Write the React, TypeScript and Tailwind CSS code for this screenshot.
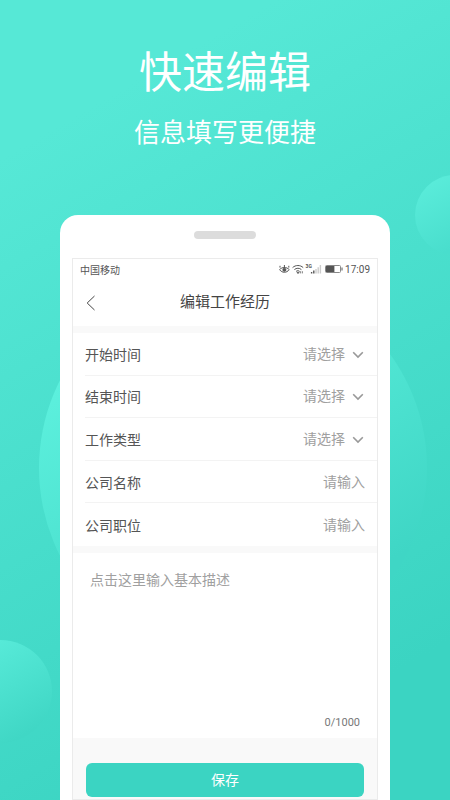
import { useState } from "react";

const selectFields = [
  { id: "start", label: "开始时间", options: ["2019年", "2020年", "2021年"] },
  { id: "end", label: "结束时间", options: ["2020年", "2021年", "至今"] },
  { id: "type", label: "工作类型", options: ["全职", "兼职", "实习"] },
];

const inputFields = [
  { id: "company", label: "公司名称" },
  { id: "position", label: "公司职位" },
];

const MAX_LENGTH = 1000;

const StatusIcons = () => (
  <svg
    width="64"
    height="12"
    viewBox="0 0 64 12"
    fill="none"
    stroke="#555"
    aria-hidden="true"
  >
    {/* eye */}
    <path d="M.6 6.6C3.2 3.8 7.6 3.8 10.2 6.6C7.6 10.2 3.2 10.2 .6 6.6Z" />
    <circle cx="5.4" cy="6.8" r="1.5" fill="#555" />
    <path d="M5.4 5V2M1 4.6V2.8M9.8 4.6V2.8" />
    {/* wifi */}
    <path d="M13.6 4.6C16.6 1.8 21.2 1.8 24.2 4.6M15.4 6.6C17.4 4.8 20.4 4.8 22.4 6.6M17.1 8.4C18.2 7.5 19.6 7.5 20.6 8.4" />
    <path d="M18 9.4h2l-1 1.2zM21.3 10.4V8.2M23.3 8.2v2.2" fill="#555" strokeWidth=".8" />
    {/* signal */}
    <text x="26.6" y="5" fill="#555" stroke="none" className="font-[Roboto] text-[5px] font-bold">
      3G
    </text>
    <path d="M32.6 10.5V9M34.8 10.5V7.5" strokeWidth="1.4" />
    <path d="M37 10.5V6M39.2 10.5V4.2M41.4 10.5V2" stroke="#ccc" strokeWidth="1.4" />
    {/* battery */}
    <rect x="46.5" y="2.5" width="15" height="7" rx="1" stroke="#888" />
    <rect x="47" y="3" width="8.4" height="6" fill="#555" stroke="none" />
    <path d="M63 4.5v3" />
  </svg>
);

const Chevron = () => (
  <svg
    className="pointer-events-none absolute right-0 top-2"
    width="12"
    height="8"
    viewBox="0 0 12 8"
    fill="none"
    stroke="#999"
    strokeWidth="1.6"
    aria-hidden="true"
  >
    <path d="M1.2 1.2L6 6L10.8 1.2" />
  </svg>
);

const Backdrop = () => (
  <div className="absolute inset-0 overflow-hidden" aria-hidden="true">
    <div className="absolute left-[39px] top-[274px] size-[388px] rounded-full bg-linear-[150deg,#5cf0dd_20%,#3fd6c5_80%]" />
    <div className="absolute -left-[51px] top-[640px] size-[103px] rounded-full bg-linear-[150deg,#58ebd9_15%,#40d7c5_85%]" />
    <div className="absolute -right-[45px] top-[175px] size-20 rounded-full bg-linear-[150deg,#5aecda_10%,#49decd_75%]" />
  </div>
);

const App = () => {
  const [description, setDescription] = useState("");

  return (
    <main className="relative flex min-h-screen flex-col bg-linear-[150deg,#56e8d6_15%,#3bd4c2_85%] font-['Noto_Sans_CJK_SC',sans-serif] text-[#555]">
      <Backdrop />

      <header className="relative pt-[45px] text-center text-white">
        <h1 className="text-[43px] leading-[48px]">快速编辑</h1>
        <p className="mt-[22px] text-[26px] leading-8">信息填写更便捷</p>
      </header>

      <section className="relative mx-[60px] mt-[68px] flex grow flex-col rounded-t-[18px] bg-white px-3 pt-4">
        <div className="mx-auto h-2 w-[62px] rounded-full bg-[#dcdcdc]" />

        <div className="mt-[19px] flex grow flex-col border border-[#ebebeb] bg-[#f9f9f9]">
          <div className="bg-white">
            <div className="flex h-5 items-center justify-between px-[7px] text-[10px]">
              <span>中国移动</span>
              <span className="flex items-center gap-0.5">
                <StatusIcons />
                <span className="font-[Roboto,sans-serif]">17:09</span>
              </span>
            </div>
            <div className="grid h-[47px] grid-cols-[36px_1fr_36px] items-center">
              <button type="button" aria-label="返回" className="flex justify-center">
                <svg width="10" height="16" viewBox="0 0 10 16" fill="none" stroke="#444">
                  <path d="M8.5 1L1.2 8L8.5 15" />
                </svg>
              </button>
              <h2 className="pb-0.5 text-center text-[15px] text-[#444]">编辑工作经历</h2>
            </div>
          </div>

          <form className="mt-[7px] flex flex-col" onSubmit={(e) => e.preventDefault()}>
            <div className="grid h-[213px] grid-rows-5 divide-y divide-[#f3f3f3] bg-white pl-3 text-[14px] leading-5">
              {selectFields.map(({ id, label, options }) => (
                <div key={id} className="flex items-center justify-between pr-[13px]">
                  <label htmlFor={id}>{label}</label>
                  <div className="relative mb-0.5">
                    <select
                      id={id}
                      defaultValue=""
                      className="block h-5 w-[61px] appearance-none bg-transparent text-[#a0a0a0] outline-none"
                    >
                      <option value="">请选择</option>
                      {options.map((option) => (
                        <option key={option}>{option}</option>
                      ))}
                    </select>
                    <Chevron />
                  </div>
                </div>
              ))}
              {inputFields.map(({ id, label }) => (
                <div key={id} className="flex items-center justify-between pr-3">
                  <label htmlFor={id}>{label}</label>
                  <input
                    id={id}
                    type="text"
                    placeholder="请输入"
                    className="mb-0.5 h-5 w-40 text-right outline-none placeholder:text-[#a0a0a0]"
                  />
                </div>
              ))}
            </div>

            <div className="mt-[7px] flex flex-col bg-white px-[17px] pb-[7px] pt-4">
              <textarea
                aria-label="基本描述"
                placeholder="点击这里输入基本描述"
                maxLength={MAX_LENGTH}
                value={description}
                onChange={(e) => setDescription(e.target.value)}
                className="h-[146px] resize-none text-[14px] leading-5 outline-none placeholder:text-[#a0a0a0]"
              />
              <span className="text-right font-[Roboto,sans-serif] text-[11px] leading-4 text-[#777]">
                {description.length}/{MAX_LENGTH}
              </span>
            </div>

            <button
              type="submit"
              className="mx-[13px] mb-0.5 mt-[25px] h-[34px] rounded-md bg-[#3bd4c2] pb-0.5 text-[14px] text-white"
            >
              保存
            </button>
          </form>
        </div>
      </section>
    </main>
  );
};

export default App;
